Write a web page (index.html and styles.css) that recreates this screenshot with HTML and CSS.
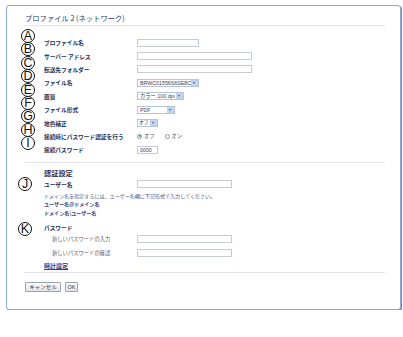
FILE: index.html
```html
<!DOCTYPE html>
<html lang="ja">
<head>
  <meta charset="UTF-8" />
  <meta name="viewport" content="width=device-width, initial-scale=1.0"/>
  <title>プロファイル 2 (ネットワーク)</title>
  <link rel="stylesheet" href="styles.css">
</head>
<body>

  <div class="frame">
    <div class="title">プロファイル 2 (ネットワーク)</div>
    <div class="rule first"></div>

    <div class="rows">
      <div class="row">
        <span class="mark up">A</span>
        <span class="label">プロファイル名</span>
        <span class="field w62"></span>
      </div>
      <div class="row">
        <span class="mark up">B</span>
        <span class="label">サーバー アドレス</span>
        <span class="field w115"></span>
      </div>
      <div class="row">
        <span class="mark up">C</span>
        <span class="label">転送先フォルダー</span>
        <span class="field w115"></span>
      </div>
      <div class="row">
        <span class="mark up">D</span>
        <span class="label">ファイル名</span>
        <span class="select w62"><span class="opt">BRWC01556S6SE8C</span><span class="arrow"></span></span>
      </div>
      <div class="row">
        <span class="mark up">E</span>
        <span class="label">画質</span>
        <span class="select w47"><span class="opt">カラー 100 dpi</span><span class="arrow"></span></span>
      </div>
      <div class="row">
        <span class="mark up">F</span>
        <span class="label">ファイル形式</span>
        <span class="select w38"><span class="opt">PDF</span><span class="arrow"></span></span>
      </div>
      <div class="row">
        <span class="mark up">G</span>
        <span class="label">地色補正</span>
        <span class="select w21"><span class="opt tight">オフ</span><span class="arrow"></span></span>
      </div>
      <div class="row">
        <span class="mark up">H</span>
        <span class="label">接続時にパスワード認証を行う</span>
        <span class="radios">
          <span class="radio on"></span><span class="radio-text">オフ</span>
          <span class="radio"></span><span class="radio-text">オン</span>
        </span>
      </div>
      <div class="row">
        <span class="mark up">I</span>
        <span class="label">接続パスワード</span>
        <span class="field w21"><span class="opt">0000</span></span>
      </div>
    </div>

    <div class="rule second"></div>

    <div class="auth">
      <div class="row head">
        <span class="mark-space"></span>
        <span class="sub-title">認証設定</span>
      </div>
      <div class="row user">
        <span class="mark">J</span>
        <span class="label">ユーザー名</span>
        <span class="field w95"></span>
      </div>
      <div class="help">
        ドメイン名を指定するには、ユーザー名欄に下記形式で入力してください。<br>
        <b>ユーザー名@ドメイン名</b><br>
        <b>ドメイン名\ユーザー名</b>
      </div>
      <div class="row pass">
        <span class="mark top">K</span>
        <span class="label">パスワード</span>
      </div>
      <div class="row pw">
        <span class="mark-space"></span>
        <span class="label sub">新しいパスワードの入力</span>
        <span class="field w95"></span>
      </div>
      <div class="row pw">
        <span class="mark-space"></span>
        <span class="label sub">新しいパスワードの確認</span>
        <span class="field w95"></span>
      </div>
      <div class="row head">
        <span class="mark-space"></span>
        <span class="link">時計設定</span>
      </div>
    </div>

    <div class="rule third"></div>

    <div class="actions">
      <button class="btn cancel">キャンセル</button>
      <button class="btn ok">OK</button>
    </div>
  </div>

</body>
</html>
```

FILE: styles.css
```css
* {
  box-sizing: border-box;
}

body {
  margin: 0;
  font-family: "Noto Sans CJK JP", "Liberation Sans", sans-serif;
  background-color: #fff;
  color: #24305a;
}

.frame {
  width: 395px;
  margin: 5px 0 0 6px;
  padding: 7px 15px 17px 17px;
  border: 1px solid #8ba8d8;
  border-radius: 3px;
  box-shadow: 1px 1px 0 #6d8fc8;
  background: #fff;
}

.title {
  font-size: 7.3px;
  line-height: 11px;
  color: #2f3a58;
  padding-left: 1px;
}

.rule {
  border-top: 1px solid #e2e4e8;
}

.rule.first {
  margin-top: 1px;
}

.rule.second {
  margin-top: 5.5px;
}

.rule.third {
  margin-top: 1.5px;
}

.rows {
  margin-top: 10px;
}

.row {
  display: flex;
  align-items: center;
  height: 13.4px;
}

.mark,
.mark-space {
  flex: none;
  width: 20px;
}

.mark {
  width: 14px;
  height: 14px;
  margin-left: -6px;
  margin-right: 12px;
  border: 1px solid #111;
  border-radius: 50%;
  font-family: "Liberation Sans", sans-serif;
  font-size: 12.5px;
  line-height: 12px;
  text-align: center;
  color: #111;
  background: #fff;
}

.mark.up {
  align-self: flex-start;
  margin-top: -7px;
  margin-left: -3px;
  margin-right: 9px;
}

.mark.top {
  align-self: flex-start;
  margin-top: 0.5px;
}

.label {
  flex: none;
  width: 93px;
  font-size: 5.7px;
  font-weight: bold;
  color: #24305a;
  white-space: nowrap;
}

.label.sub {
  padding-left: 8px;
  font-size: 5.3px;
  font-weight: normal;
  color: #56617a;
}

.field,
.select {
  display: flex;
  align-items: center;
  height: 8px;
  border: 1px solid #c5ccd7;
  background: #fff;
}

.w21 { width: 21px; }
.w38 { width: 38px; }
.w47 { width: 47px; }
.w62 { width: 62px; }
.w95 { width: 95px; }
.w115 { width: 115px; }

.select {
  border-color: #b7c3d6;
  justify-content: space-between;
}

.opt {
  padding-left: 2px;
  font-family: "Liberation Sans", "Noto Sans CJK JP", sans-serif;
  font-size: 5.3px;
  line-height: 6px;
  color: #3c4250;
  white-space: nowrap;
  overflow: hidden;
}

.opt.tight {
  padding-left: 1px;
  font-size: 4.8px;
}

.arrow {
  flex: none;
  width: 7px;
  height: 6px;
  background: #c3d3ee;
  position: relative;
}

.arrow::after {
  content: "";
  position: absolute;
  left: 2px;
  top: 2px;
  border-left: 1.5px solid transparent;
  border-right: 1.5px solid transparent;
  border-top: 2px solid #3e5a98;
}

.radios {
  display: flex;
  align-items: center;
}

.radio {
  width: 5px;
  height: 5px;
  border: 1px solid #8d96a6;
  border-radius: 50%;
  background: #fff;
  position: relative;
}

.radio.on::after {
  content: "";
  position: absolute;
  left: 0.5px;
  top: 0.5px;
  width: 2px;
  height: 2px;
  border-radius: 50%;
  background: #3f9a3c;
}

.radio-text {
  margin: 0 10px 0 2px;
  font-size: 5.3px;
  color: #555d6e;
}

.auth {
  margin-top: 4.5px;
}

.auth .row.head,
.auth .row.user,
.auth .row.pass {
  height: 11px;
}

.auth .row.pw {
  height: 13.5px;
}

.auth .row.pass {
  margin-top: 4.5px;
  align-items: flex-start;
}

.auth .row.pass .label {
  line-height: 11px;
}

.sub-title {
  font-size: 7.2px;
  font-weight: 600;
  color: #2a3454;
}

.help {
  margin: 2px 0 0 20px;
  font-size: 5.05px;
  line-height: 8.5px;
  color: #4a5a90;
}

.help b {
  font-weight: bold;
  color: #34447e;
}

.link {
  font-size: 6px;
  font-weight: bold;
  color: #2c3e8a;
  text-decoration: underline;
}

.actions {
  display: flex;
  gap: 4px;
  margin-top: 8.5px;
  padding-left: 1px;
}

.btn {
  height: 10px;
  padding: 0;
  border: 1px solid #98a2b2;
  border-radius: 1px;
  background: linear-gradient(#fbfbfb, #e3e5e8);
  font-family: "Noto Sans CJK JP", sans-serif;
  font-size: 5.5px;
  line-height: 8px;
  color: #39404e;
}

.btn.cancel {
  width: 36px;
}

.btn.ok {
  width: 13px;
  font-family: "Liberation Sans", sans-serif;
}
```
